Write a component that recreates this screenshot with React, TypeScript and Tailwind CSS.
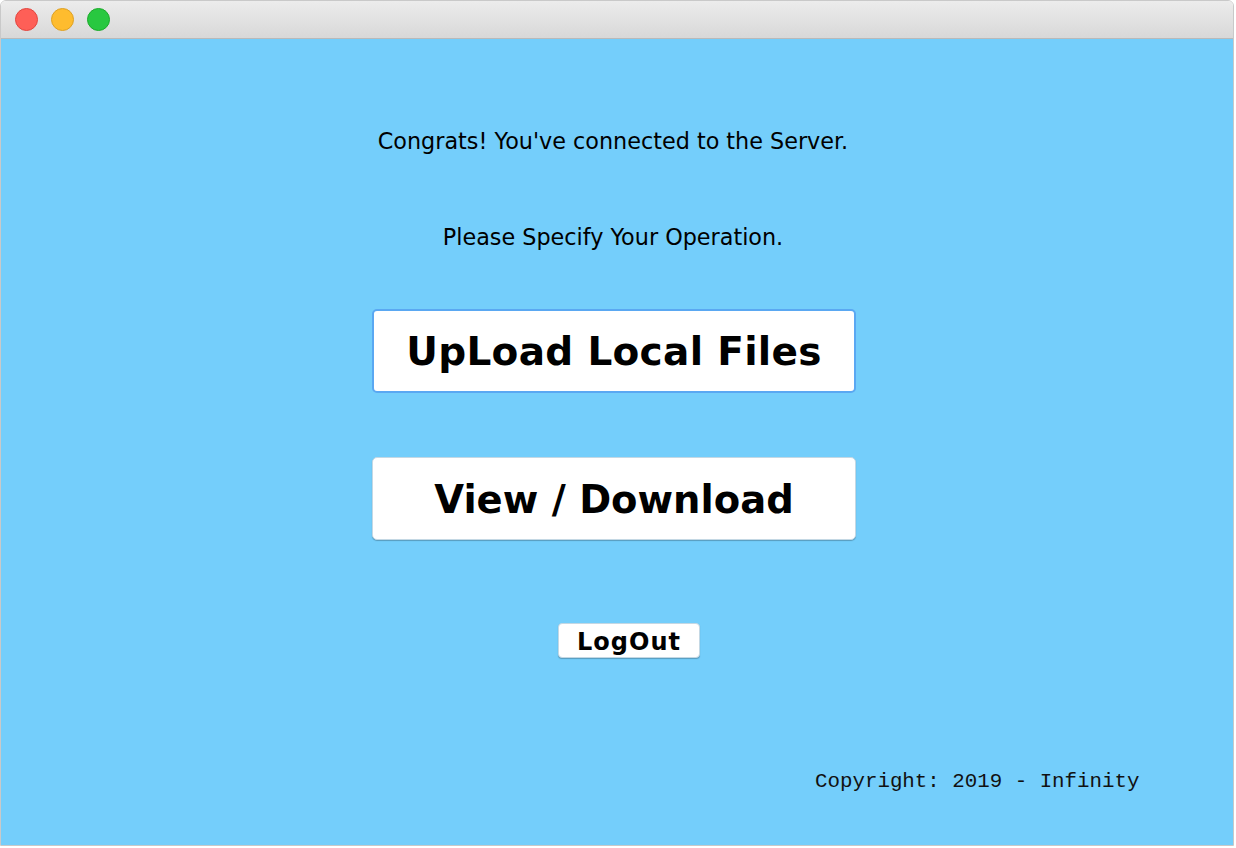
import React from "react";

export default function App() {
  return (
    <div className="w-[1236px] h-[848px] bg-white overflow-hidden">
      <div className="w-[1234px] h-[846px] flex flex-col rounded-t-[6px] overflow-hidden border border-[#c9c9c9]">
        <div className="h-[38px] shrink-0 flex items-center gap-[13px] pl-[14px] bg-gradient-to-b from-[#ececec] to-[#d8d8d8] border-b border-[#b9b9b9]">
          <div className="w-[23px] h-[23px] rounded-full bg-[#fe5f57] border border-[#e2463f]" />
          <div className="w-[23px] h-[23px] rounded-full bg-[#febc2e] border border-[#dea123]" />
          <div className="w-[23px] h-[23px] rounded-full bg-[#28c840] border border-[#1aab29]" />
        </div>
        <div className="flex-1 bg-[#74cefb] flex flex-col items-center relative" style={{ fontFamily: '"DejaVu Sans", sans-serif' }}>
          <div className="mt-[90px] pr-[8px] text-[22.3px] leading-[24px] text-black">Congrats! You've connected to the Server.</div>
          <div className="mt-[72px] pr-[8px] text-[22.3px] leading-[24px] text-black">Please Specify Your Operation.</div>
          <button className="mt-[60px] mr-[6px] w-[484px] h-[84px] pt-[3px] bg-white rounded-[5px] border-2 border-[#5aa8f2] text-[39px] font-bold text-black tracking-[0.3px]" style={{ fontFamily: '"DejaVu Sans", sans-serif' }}>
            UpLoad Local Files
          </button>
          <button className="mt-[64px] mr-[6px] w-[484px] h-[83px] pt-[3px] bg-white rounded-[5px] border border-[#c4d8e4] shadow-[0_1px_1px_rgba(0,0,0,0.25)] text-[38.5px] font-bold text-black" style={{ fontFamily: '"DejaVu Sans", sans-serif' }}>
            View / Download
          </button>
          <button className="mt-[83px] ml-[24px] w-[142px] h-[35px] pt-[3px] bg-white rounded-[4px] border border-[#c4d8e4] shadow-[0_1px_1px_rgba(0,0,0,0.25)] text-[24px] font-bold text-black leading-none tracking-[1px]" style={{ fontFamily: '"DejaVu Sans", sans-serif' }}>
            LogOut
          </button>
          <div className="absolute left-[814px] top-[731px] text-[20.8px] leading-[24px] text-[#111]" style={{ fontFamily: '"Liberation Mono", "Courier New", monospace' }}>
            Copyright: 2019 - Infinity
          </div>
        </div>
      </div>
    </div>
  );
}
